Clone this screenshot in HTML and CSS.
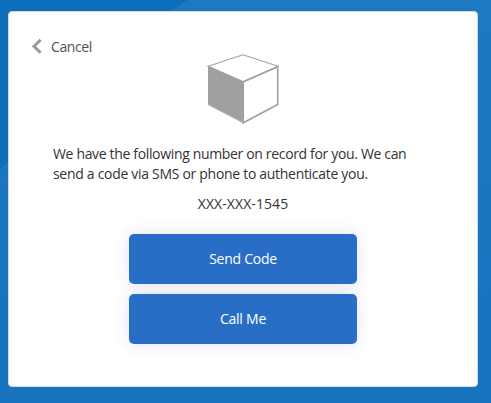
FILE: index.html
```html
<!DOCTYPE html>
<html lang="en">
<head>
<meta charset="utf-8">
<title>Verify your phone</title>
<link rel="stylesheet" href="styles.css">
</head>
<body>
<main class="card">
  <a class="cancel">
    <svg class="chevron" width="10" height="16" viewBox="0 0 10 16"><path d="M8.6 1.8 2 8.3l6.6 6.5" fill="none" stroke="#999" stroke-width="3"/></svg>
    <span>Cancel</span>
  </a>
  <svg class="logo" width="72" height="72" viewBox="0 0 72 72">
    <path d="M1.5 13.5 36.5 28.5v41L1.5 51.5z" fill="#a0a0a0"/>
    <path d="M1.3 13.3 36 1.8 71 13.3 36.5 28.8z" fill="none" stroke="#a0a0a0" stroke-width="1.2"/>
    <path d="M36.3 28.8 70.7 13.7v37.8L36.3 69.8z" fill="none" stroke="#a0a0a0" stroke-width="1.6"/>
    <path d="M1.5 13.3v38.3l34.8 18.2" fill="none" stroke="#a0a0a0"/>
  </svg>
  <p class="message"><span class="line first">We have the following number on record for you. We can</span> <span class="line second">send a code via SMS or phone to authenticate you.</span></p>
  <p class="phone">XXX-XXX-1545</p>
  <div class="actions">
    <button class="button" type="button">Send Code</button>
    <button class="button" type="button">Call Me</button>
  </div>
</main>
</body>
</html>
```
FILE: styles.css
```css
* { box-sizing: border-box; }
body {
  margin: 0;
  width: 491px;
  height: 403px;
  padding: 11px 13px 16px 8px;
  overflow: hidden;
  background: radial-gradient(circle at 727px 782px, transparent 949.5px, #0d6ebb 950.5px), linear-gradient(#1f79c1, #1974bf 75%);
  font: 14px/20px "Open Sans", "Noto Sans", sans-serif;
  color: #333;
}
.card {
  display: flex;
  flex-direction: column;
  align-items: center;
  height: 376px;
  border: 1px solid #d6d9dc;
  border-radius: 4px;
  background: #fff;
}
.cancel {
  display: flex;
  align-self: flex-start;
  gap: 9px;
  height: 20px;
  margin: 25px 0 0 23px;
  color: #505050;
  letter-spacing: -0.4px;
}
.chevron { margin-top: 1px; }
.logo { margin-top: -4px; }
.message { width: 380px; margin: 19px 0 0; }
.line { display: block; white-space: nowrap; }
.first { letter-spacing: -0.34px; }
.second { letter-spacing: -0.3px; }
.phone { margin: 10px 0 0; letter-spacing: 0.08px; }
.actions {
  display: flex;
  flex-direction: column;
  gap: 10px;
  width: 228px;
  margin-top: 20px;
}
.button {
  height: 50px;
  padding: 0;
  border: 0;
  border-radius: 5px;
  background: #296ec6;
  box-shadow: 0 0 15px rgba(60, 60, 200, .15);
  color: #fff;
  font: inherit;
  letter-spacing: -0.25px;
}
```
